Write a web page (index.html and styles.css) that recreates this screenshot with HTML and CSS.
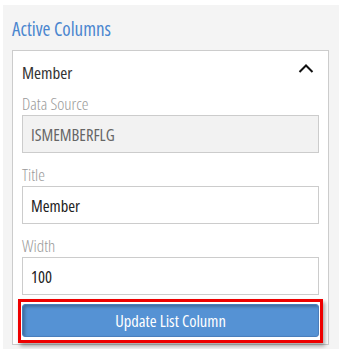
FILE: index.html
```html
<!DOCTYPE html>
<html>
<head>
<meta charset="utf-8">
<link rel="stylesheet" href="styles.css">
</head>
<body>
<div class="panel">
  <h2 class="panel-title">Active Columns</h2>
  <div class="card">
    <div class="card-head">
      <span class="card-name">Member</span>
      <svg class="chevron" width="16" height="10" viewBox="0 0 16 10"><path d="M1.5 8 L8 1.5 L14.5 8" fill="none" stroke="#111" stroke-width="2"/></svg>
    </div>
    <div class="field">
      <label class="field-label">Data Source</label>
      <div class="input readonly">ISMEMBERFLG</div>
    </div>
    <div class="field">
      <label class="field-label">Title</label>
      <div class="input">Member</div>
    </div>
    <div class="field">
      <label class="field-label">Width</label>
      <div class="input">100</div>
    </div>
    <div class="highlight">
      <button class="btn">Update List Column</button>
    </div>
  </div>
</div>
</body>
</html>
```
FILE: styles.css
```css
html, body {
  margin: 0;
  padding: 0;
  background: #fff;
}
body {
  padding: 5px 0 0 3px;
  font-family: "Open Sans", "DejaVu Sans", sans-serif;
  font-stretch: 78%;
  font-weight: 400;
}
.panel {
  background: #f4f4f4;
  padding: 14px 10px 5px 9px;
  height: 344px;
  box-sizing: border-box;
}
.panel-title {
  margin: 0;
  font-weight: 380;
  font-size: 19px;
  line-height: 20px;
  color: #4a86cf;
  height: 31px;
}
.card {
  background: #fff;
  border: 1px solid #cccccc;
  padding: 0 9px 0 9px;
  height: 295px;
  box-sizing: border-box;
}
.card-head {
  display: flex;
  justify-content: space-between;
  align-items: center;
  height: 42px;
}
.card-name {
  font-size: 17px;
  color: #333;
}
.chevron {
  margin-right: 5px;
  margin-top: -6px;
}
.field-label {
  display: block;
  font-size: 17px;
  font-weight: 360;
  color: #9a9a9a;
  line-height: 20px;
  height: 22px;
  padding-top: 1px;
  box-sizing: border-box;
}
.input {
  border: 1px solid #cccccc;
  height: 38px;
  box-sizing: border-box;
  padding: 0 8px;
  display: flex;
  align-items: center;
  font-size: 16.5px;
  color: #222;
  background: #fff;
  margin-bottom: 11px;
}
.input.readonly {
  background: #f2f2f2;
  color: #666;
}
.highlight {
  margin: -7px -4px 0 -4px;
  border: 3px solid #ee0000;
  padding: 2px 1px 3px 1px;
  box-shadow: 2px 3px 4px rgba(0,0,0,0.35);
}
.btn {
  display: block;
  width: 100%;
  height: 33px;
  border: 1px solid #4a7fbd;
  border-radius: 3px;
  background: #5592d4;
  color: #fff;
  font-family: inherit;
  font-stretch: 78%;
  font-weight: 400;
  font-size: 16.5px;
  box-shadow: inset 2px 2px 3px rgba(0,0,0,0.25);
}
```
